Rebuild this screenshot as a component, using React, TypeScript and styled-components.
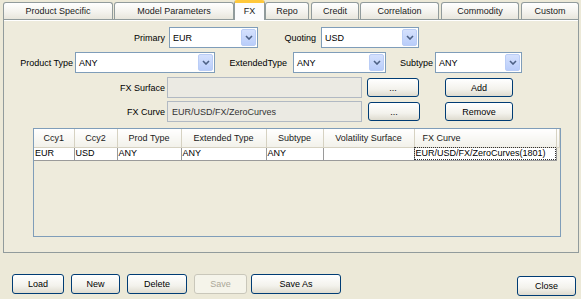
import React from "react";
import styled, { createGlobalStyle } from "styled-components";

const GlobalStyle = createGlobalStyle`
  html, body {
    margin: 0;
    padding: 0;
    background: #ece9d8;
  }
  body {
    font-family: "Liberation Sans", Arial, sans-serif;
    font-size: 9px;
    color: #000;
  }
  * {
    box-sizing: border-box;
  }
`;

const Window = styled.div`
  width: 581px;
  height: 299px;
  background: #ece9d8;
  overflow: hidden;
`;

const TabStrip = styled.div`
  display: flex;
  align-items: flex-end;
  height: 19px;
  padding-left: 3px;
`;

const Tab = styled.div<{ $w: number; $gap?: number; $active?: boolean }>`
  position: relative;
  z-index: ${(p) => (p.$active ? 2 : 1)};
  width: ${(p) => p.$w}px;
  margin-left: ${(p) => p.$gap ?? 0}px;
  height: ${(p) => (p.$active ? 20 : 17)}px;
  margin-bottom: ${(p) => (p.$active ? -1 : 0)}px;
  display: flex;
  align-items: center;
  justify-content: center;
  border: 1px solid #919b9c;
  border-bottom: none;
  border-radius: 3px 3px 0 0;
  background: ${(p) =>
    p.$active
      ? "#fcfcfe"
      : "linear-gradient(#ffffff, #f4f3ee 55%, #e8e6dc)"};
  border-top: ${(p) => (p.$active ? "3px solid #ffc83c" : "1px solid #919b9c")};
  padding-bottom: ${(p) => (p.$active ? 2 : 0)}px;
  color: #1a1a1a;
  white-space: nowrap;
`;

const Panel = styled.div`
  margin-left: 3px;
  width: 576px;
  height: 234px;
  border: 1px solid #919b9c;
  background: #eeebdc;
  box-shadow: inset 0 1px 0 #ffffff;
  padding-top: 7px;
`;

const FormRow = styled.div<{ $top?: number }>`
  display: flex;
  align-items: center;
  height: 21px;
  margin-top: ${(p) => p.$top ?? 0}px;
`;

const Label = styled.div<{ $w: number; $gap?: number }>`
  width: ${(p) => p.$w}px;
  margin-right: ${(p) => p.$gap ?? 4}px;
  text-align: right;
  white-space: nowrap;
`;

const ComboBox = styled.div<{ $w: number }>`
  width: ${(p) => p.$w}px;
  height: 21px;
  border: 1px solid #7f9db9;
  background: #ffffff;
  display: flex;
  align-items: center;
  padding: 1px;
`;

const ComboText = styled.div`
  flex: 1;
  padding-left: 2px;
`;

const ArrowButton = styled.div`
  width: 15px;
  height: 17px;
  border: 1px solid #bacdf6;
  border-radius: 2px;
  background: linear-gradient(#d5e1fd, #b9cdfa);
  display: flex;
  align-items: center;
  justify-content: center;
`;

const TextField = styled.div<{ $w: number }>`
  width: ${(p) => p.$w}px;
  height: 21px;
  border: 1px solid #b1b9c3;
  background: #ebeae3;
  display: flex;
  align-items: center;
  padding-left: 4px;
  color: #333;
`;

const Button = styled.div<{ $w: number; $gap?: number; $disabled?: boolean; $top?: number; $h?: number }>`
  width: ${(p) => p.$w}px;
  height: ${(p) => p.$h ?? 19}px;
  margin-left: ${(p) => p.$gap ?? 0}px;
  margin-top: ${(p) => p.$top ?? 0}px;
  border: 1px solid ${(p) => (p.$disabled ? "#c9c7ba" : "#003c74")};
  border-radius: 3px;
  background: ${(p) =>
    p.$disabled ? "#f5f4ea" : "linear-gradient(#ffffff, #f3f2ec 60%, #dedbcf)"};
  color: ${(p) => (p.$disabled ? "#aca899" : "#000")};
  display: flex;
  align-items: center;
  justify-content: center;
  white-space: nowrap;
`;

const TablePane = styled.div`
  margin-left: 29px;
  margin-top: 6px;
  width: 528px;
  height: 109px;
  border: 1px solid #7f9db9;
  background: #eeebdc;
  overflow: hidden;
`;

const Grid = styled.table`
  width: 100%;
  border-collapse: collapse;
  table-layout: fixed;
  font-size: 9px;
`;

const HeadCell = styled.th<{ $left?: boolean }>`
  height: 18px;
  padding: ${(p) => (p.$left ? "0 0 0 8px" : "0")};
  font-weight: normal;
  text-align: ${(p) => (p.$left ? "left" : "center")};
  background: linear-gradient(#ffffff, #f2f1ea);
  border-right: 1px solid #d6d2c2;
  border-bottom: 1px solid #d6d2c2;
  color: #1a1a1a;
  white-space: nowrap;
  overflow: hidden;
`;

const BodyCell = styled.td<{ $focus?: boolean; $empty?: boolean }>`
  height: 13px;
  padding: 0 0 0 1px;
  background: ${(p) => (p.$empty ? "transparent" : "#ffffff")};
  border-right: ${(p) => (p.$empty ? "none" : "1px solid #9a9a9a")};
  border-bottom: ${(p) => (p.$empty ? "none" : "1px solid #9a9a9a")};
  outline: ${(p) => (p.$focus ? "1px dotted #333" : "none")};
  outline-offset: -1px;
  white-space: nowrap;
  overflow: hidden;
  line-height: 11px;
`;

const Footer = styled.div`
  display: flex;
  align-items: flex-start;
  padding: 21px 5px 0 12px;
`;

const Spacer = styled.div`
  flex: 1;
`;

const Chevron = () => (
  <svg width="8" height="5" viewBox="0 0 8 5">
    <path d="M1 1 L4 4 L7 1" fill="none" stroke="#4d6185" strokeWidth="1.6" />
  </svg>
);

const Combo: React.FC<{ w: number; value: string }> = ({ w, value }) => (
  <ComboBox $w={w}>
    <ComboText>{value}</ComboText>
    <ArrowButton>
      <Chevron />
    </ArrowButton>
  </ComboBox>
);

const tabs = [
  { label: "Product Specific", w: 110, gap: 0 },
  { label: "Model Parameters", w: 120, gap: 1 },
  { label: "FX", w: 31, gap: 0, active: true },
  { label: "Repo", w: 44, gap: 0 },
  { label: "Credit", w: 48, gap: 2 },
  { label: "Correlation", w: 79, gap: 1 },
  { label: "Commodity", w: 78, gap: 2 },
  { label: "Custom", w: 58, gap: 2 },
];

const columns = [
  { header: "Ccy1", w: 40, value: "EUR" },
  { header: "Ccy2", w: 43, value: "USD" },
  { header: "Prod Type", w: 64, value: "ANY" },
  { header: "Extended Type", w: 85, value: "ANY" },
  { header: "Subtype", w: 57, value: "ANY" },
  { header: "Volatility Surface", w: 91, value: "" },
  { header: "FX Curve", w: 142, value: "EUR/USD/FX/ZeroCurves(1801)" },
];

export default function App() {
  return (
    <Window>
      <GlobalStyle />
      <TabStrip>
        {tabs.map((t) => (
          <Tab key={t.label} $w={t.w} $gap={t.gap} $active={t.active}>
            {t.label}
          </Tab>
        ))}
      </TabStrip>
      <Panel>
        <FormRow>
          <Label $w={161}>Primary</Label>
          <Combo w={89} value="EUR" />
          <Label $w={58} $gap={5}>Quoting</Label>
          <Combo w={98} value="USD" />
        </FormRow>
        <FormRow $top={4}>
          <Label $w={69} $gap={2}>Product Type</Label>
          <Combo w={140} value="ANY" />
          <Label $w={72} $gap={6}>ExtendedType</Label>
          <Combo w={93} value="ANY" />
          <Label $w={47} $gap={2}>Subtype</Label>
          <Combo w={87} value="ANY" />
        </FormRow>
        <FormRow $top={4}>
          <Label $w={161} $gap={2}>FX Surface</Label>
          <TextField $w={195} />
          <Button $w={52} $gap={5}>...</Button>
          <Button $w={68} $gap={26}>Add</Button>
        </FormRow>
        <FormRow $top={3}>
          <Label $w={161} $gap={2}>FX Curve</Label>
          <TextField $w={195}>EUR/USD/FX/ZeroCurves</TextField>
          <Button $w={52} $gap={6}>...</Button>
          <Button $w={68} $gap={25}>Remove</Button>
        </FormRow>
        <TablePane>
          <Grid>
            <colgroup>
              {columns.map((c) => (
                <col key={c.header} width={c.w} />
              ))}
              <col />
            </colgroup>
            <thead>
              <tr>
                {columns.map((c, i) => (
                  <HeadCell key={c.header} $left={i === columns.length - 1}>
                    {c.header}
                  </HeadCell>
                ))}
                <HeadCell />
              </tr>
            </thead>
            <tbody>
              <tr>
                {columns.map((c, i) => (
                  <BodyCell key={c.header} $focus={i === columns.length - 1}>
                    {c.value}
                  </BodyCell>
                ))}
                <BodyCell $empty />
              </tr>
            </tbody>
          </Grid>
        </TablePane>
      </Panel>
      <Footer>
        <Button $w={52} $h={20}>Load</Button>
        <Button $w={49} $h={20} $gap={7}>New</Button>
        <Button $w={60} $h={20} $gap={7}>Delete</Button>
        <Button $w={53} $h={20} $gap={7} $disabled>Save</Button>
        <Button $w={90} $h={20} $gap={4}>Save As</Button>
        <Spacer />
        <Button $w={59} $h={20} $top={2}>Close</Button>
      </Footer>
    </Window>
  );
}
